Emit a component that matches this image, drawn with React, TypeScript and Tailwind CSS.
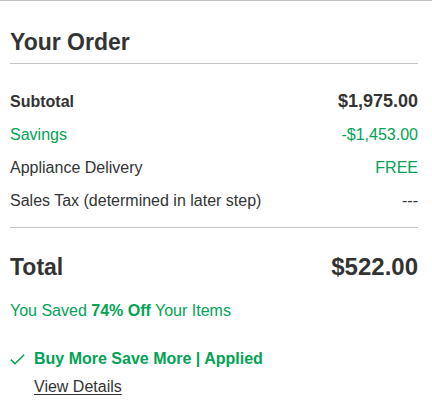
const green = 'text-[#00a354]';

const rows = [
  { label: 'Subtotal', value: '$1,975.00', bold: true, green: false, valueGreen: false },
  { label: 'Savings', value: '-$1,453.00', bold: false, green: true, valueGreen: true },
  { label: 'Appliance Delivery', value: 'FREE', bold: false, green: false, valueGreen: true },
  { label: 'Sales Tax (determined in later step)', value: '---', bold: false, green: false, valueGreen: false },
];

export default function App() {
  return (
    <div className="min-h-screen bg-white border-t border-[#bdbdbd] pl-[10px] pr-[14px] text-[#333] font-['Liberation_Sans',Arial,sans-serif]">
      <h2 className="pt-[27px] pb-[7px] border-b border-[#c4c4c4] text-[23px] leading-[28px] font-bold">Your Order</h2>

      <div className="pt-[21px] pb-[10px] border-b border-[#c4c4c4]">
        {rows.map((row) => (
          <div key={row.label} className="flex items-baseline justify-between leading-[33px] text-[16px]">
            <span className={`${row.bold ? 'font-bold' : ''} ${row.green ? green : ''}`}>{row.label}</span>
            <span className={`${row.bold ? 'font-bold text-[18px]' : ''} ${row.valueGreen ? green : ''}`}>{row.value}</span>
          </div>
        ))}
      </div>

      <div className="pt-[23px] flex items-baseline justify-between leading-[32px] font-bold">
        <span className="text-[23px]">Total</span>
        <span className="text-[24px]">$522.00</span>
      </div>

      <p className={`mt-[16px] text-[16px] leading-[24px] ${green}`}>
        You Saved <span className="font-bold">74% Off</span> Your Items
      </p>

      <div className="mt-[24px] flex items-center gap-[9px] text-[16px] leading-[24px]">
        <svg width="15" height="11" viewBox="0 0 15 11" fill="none" className="text-[#00a354]">
          <polyline points="0.8,5.6 5,9.8 14.2,0.8" stroke="currentColor" strokeWidth="1.5" />
        </svg>
        <span className={`font-bold ${green}`}>Buy More Save More | Applied</span>
      </div>
      <a href="#" className="mt-[4px] ml-[24px] block w-fit text-[16px] leading-[24px] underline underline-offset-[2px] text-[#333]">
        View Details
      </a>
    </div>
  );
}
